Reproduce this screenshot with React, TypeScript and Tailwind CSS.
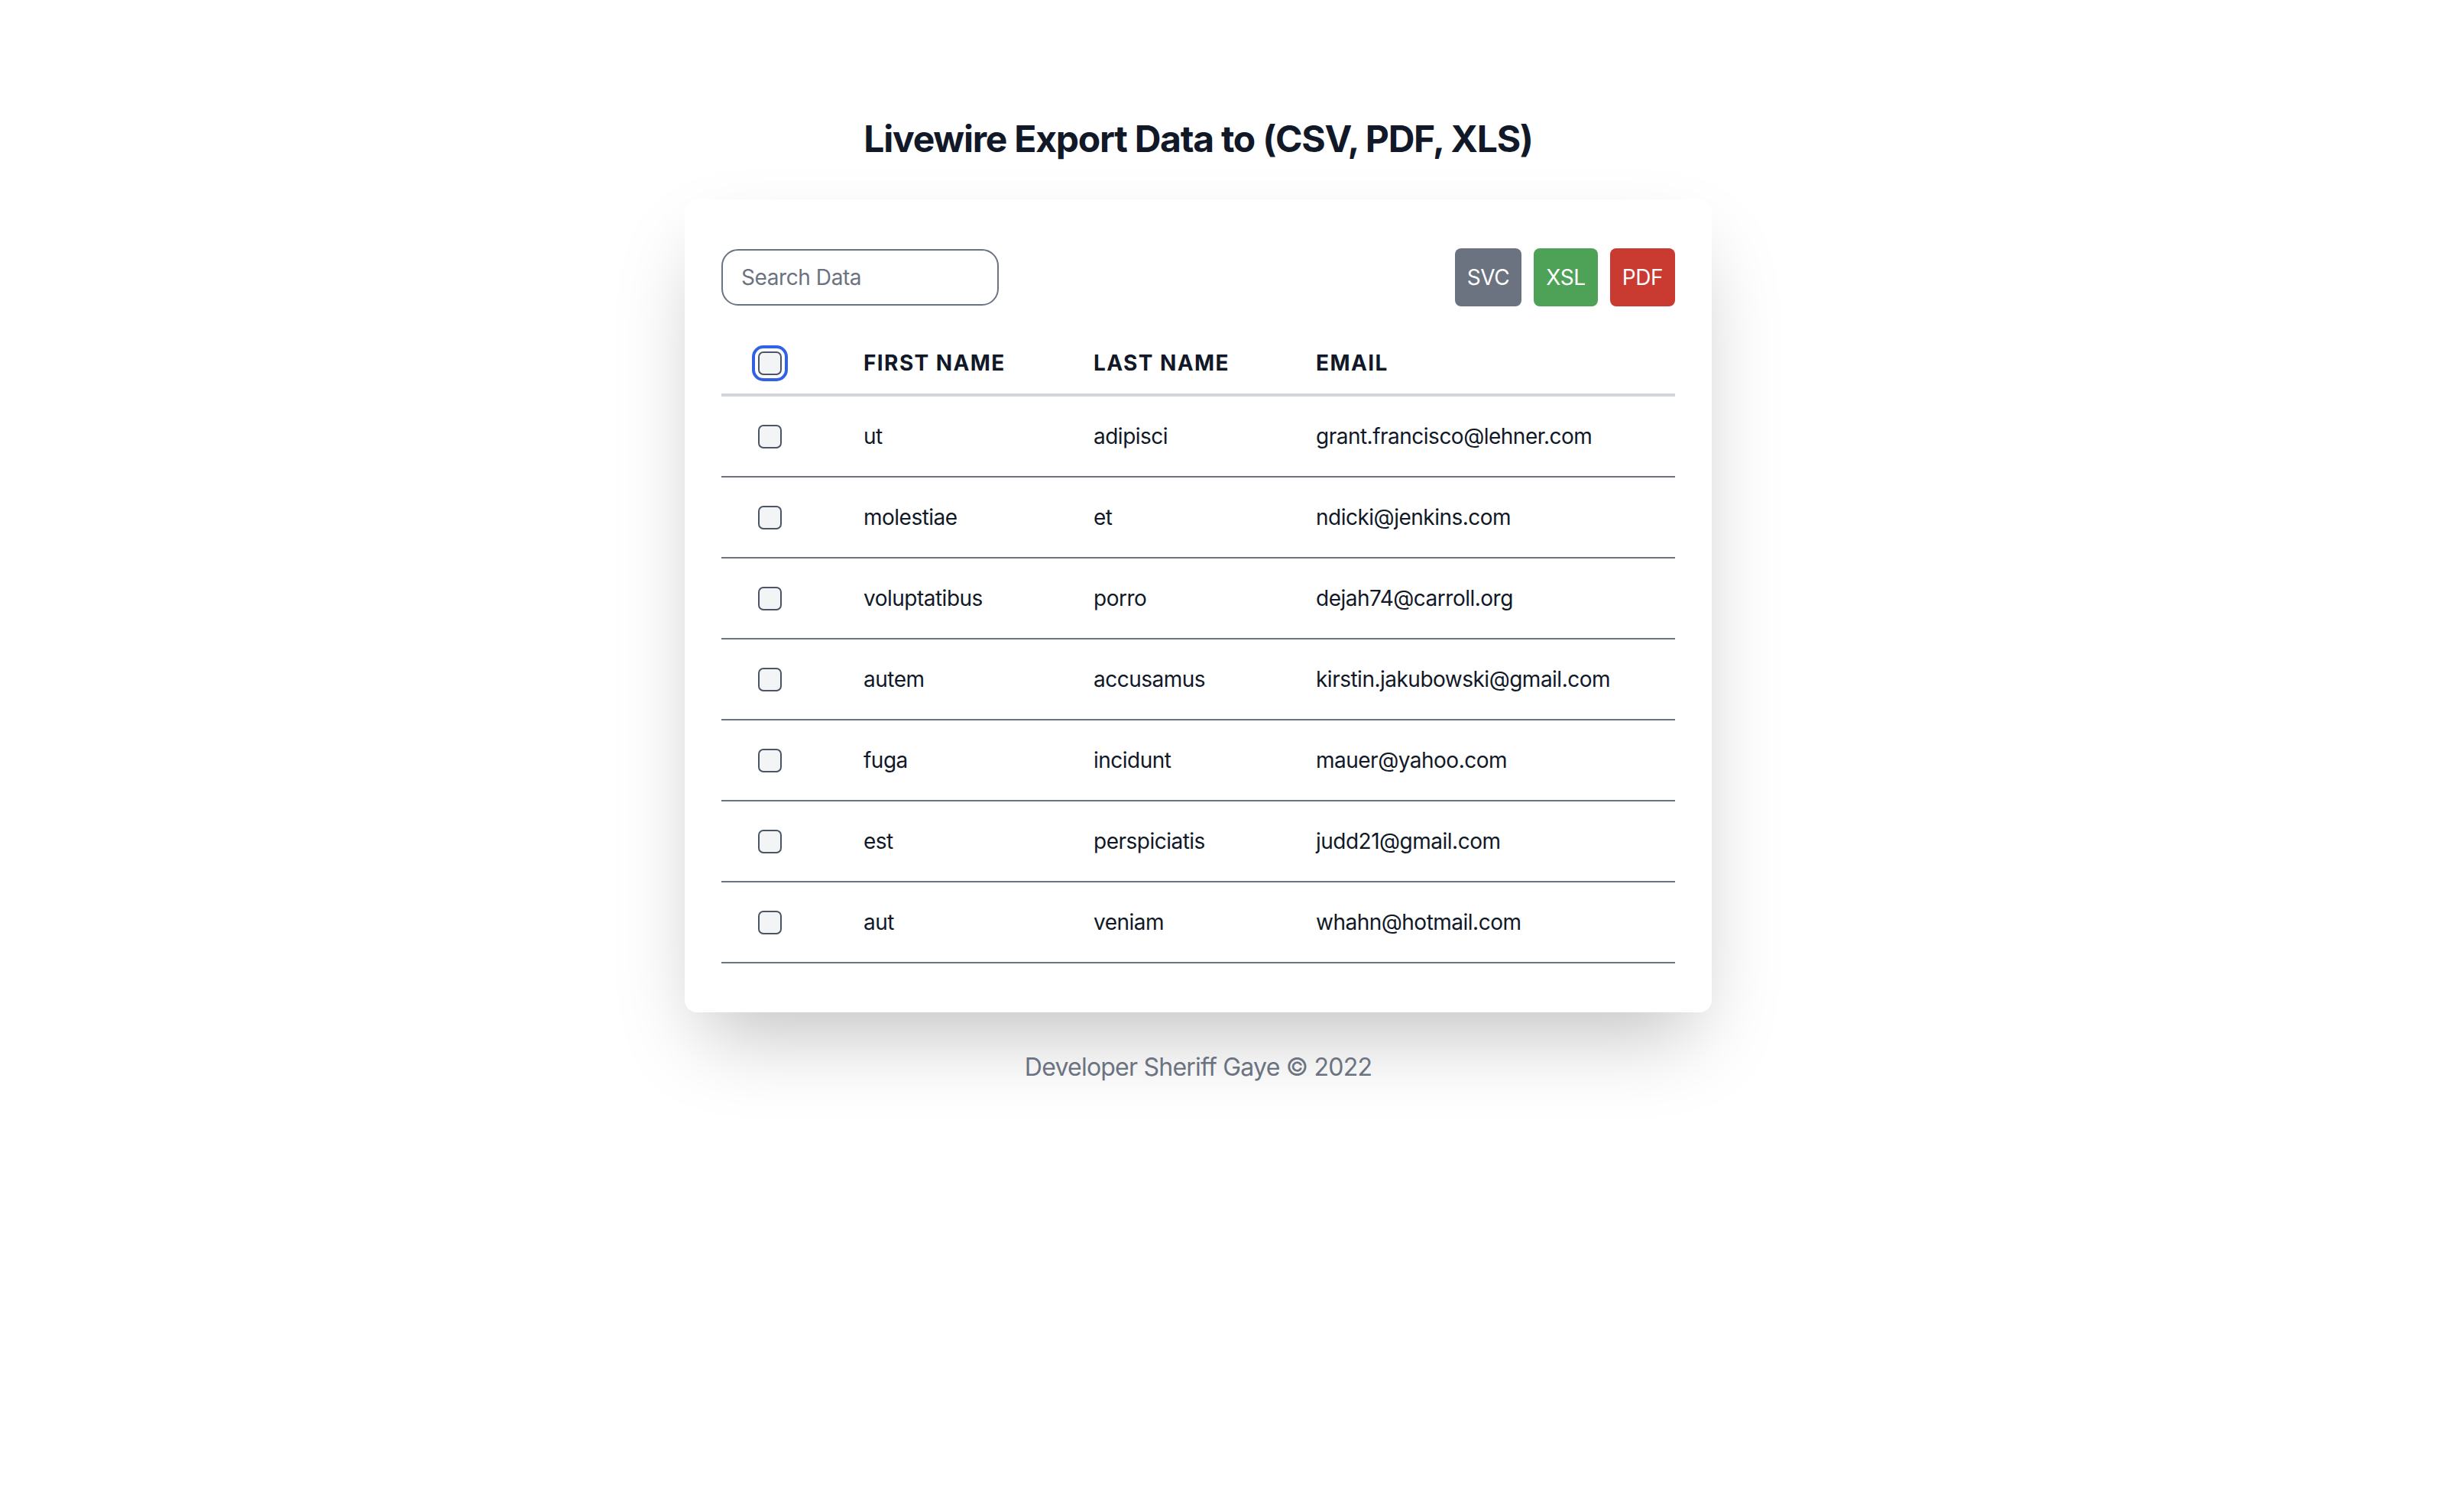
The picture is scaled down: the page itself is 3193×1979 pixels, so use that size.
import React from "react";

interface Row {
  first: string;
  last: string;
  email: string;
}

const rows: Row[] = [
  { first: "ut", last: "adipisci", email: "grant.francisco@lehner.com" },
  { first: "molestiae", last: "et", email: "ndicki@jenkins.com" },
  { first: "voluptatibus", last: "porro", email: "dejah74@carroll.org" },
  { first: "autem", last: "accusamus", email: "kirstin.jakubowski@gmail.com" },
  { first: "fuga", last: "incidunt", email: "mauer@yahoo.com" },
  { first: "est", last: "perspiciatis", email: "judd21@gmail.com" },
  { first: "aut", last: "veniam", email: "whahn@hotmail.com" },
];

const cols = "grid grid-cols-[186px_301px_291px_1fr] items-center";

function Box({ focused }: { focused?: boolean }) {
  return (
    <span
      className={`block w-[31px] h-[31px] rounded-[7px] border-2 border-[#4b5563] bg-[#f3f4f6] ${
        focused ? "ring-4 ring-[#2f62e6] ring-offset-4 ring-offset-white" : ""
      }`}
    />
  );
}

export default function App() {
  return (
    <div
      className="min-h-[1979px] w-[3136px] bg-white flex flex-col items-center pt-[150px]"
      style={{ fontFamily: "Inter, 'Noto Sans', sans-serif" }}
    >
      <h1 className="text-[48px] leading-[64px] font-bold tracking-[-0.026em] text-[#111827]">
        Livewire Export Data to (CSV, PDF, XLS)
      </h1>

      <div className="mt-[47px] w-[1344px] bg-white rounded-[16px] shadow-[0_50px_100px_-24px_rgba(0,0,0,0.25)] px-[48px] pt-[64px] pb-[64px]">
        <div className="flex items-center justify-between">
          <input
            type="text"
            placeholder="Search Data"
            className="w-[363px] h-[74px] rounded-[22px] border-2 border-[#6b7280] px-[24px] text-[28px] tracking-[-0.015em] text-[#111827] placeholder:text-[#6b7280] outline-none"
          />
          <div className="flex gap-[16px] text-[28px] tracking-[-0.015em]">
            <button className="h-[76px] w-[87px] rounded-[8px] bg-[#6b7280] text-white">
              SVC
            </button>
            <button className="h-[76px] w-[84px] rounded-[8px] bg-[#4ea257] text-white">
              XSL
            </button>
            <button className="h-[76px] w-[85px] rounded-[8px] bg-[#c93a31] text-white">
              PDF
            </button>
          </div>
        </div>

        <div className="mt-[34px]">
          <div className={`${cols} h-[84px] border-b-4 border-[#d1d5db]`}>
            <div className="pl-[48px]">
              <Box focused />
            </div>
            <div className="text-[28px] font-bold tracking-wider text-[#111827]">FIRST NAME</div>
            <div className="text-[28px] font-bold tracking-wider text-[#111827]">LAST NAME</div>
            <div className="text-[28px] font-bold tracking-wider text-[#111827]">EMAIL</div>
          </div>

          {rows.map((r) => (
            <div
              key={r.email}
              className={`${cols} h-[106px] border-b-2 border-[#6b7280] text-[28px] tracking-[-0.018em] text-[#111827]`}
            >
              <div className="pl-[48px]">
                <Box />
              </div>
              <div>{r.first}</div>
              <div>{r.last}</div>
              <div>{r.email}</div>
            </div>
          ))}
        </div>
      </div>

      <p className="mt-[48px] text-[32px] leading-[48px] tracking-[-0.024em] text-[#6b7280]">
        Developer Sheriff Gaye © 2022
      </p>
    </div>
  );
}
